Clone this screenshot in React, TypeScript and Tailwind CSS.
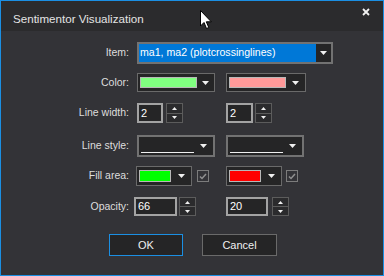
import React from 'react';

const font = { fontFamily: '"Liberation Sans", Arial, sans-serif' };

function Arrow() {
    return (
        <svg width="7" height="4" viewBox="0 0 7 4" className="block">
            <polygon points="0,0 7,0 3.5,4" fill="#f0f0f0" />
        </svg>
    );
}

function SpinButtons({ h }: { h: string }) {
    return (
        <div className={`flex flex-col w-[17px] ${h}`}>
            <div className="flex-1 flex items-center justify-center border border-[#5c5c5c] bg-[#2b2b2d]">
                <svg width="5" height="3" viewBox="0 0 5 3"><polygon points="2.5,0 5,3 0,3" fill="#f0f0f0" /></svg>
            </div>
            <div className="flex-1 flex items-center justify-center border border-t-0 border-[#5c5c5c] bg-[#2b2b2d]">
                <svg width="5" height="3" viewBox="0 0 5 3"><polygon points="0,0 5,0 2.5,3" fill="#f0f0f0" /></svg>
            </div>
        </div>
    );
}

function ColorCombo({ color, w, h, swatchW }: { color: string; w: string; h: string; swatchW: string }) {
    return (
        <div className={`flex items-center ${w} ${h} border border-[#6a6a6a] bg-[#252526] pl-[2px]`}>
            <div className={`${swatchW} h-[calc(100%-6px)] border border-[#b8b8b8]`} style={{ backgroundColor: color }} />
            <div className="flex-1 flex items-center justify-center">
                <Arrow />
            </div>
        </div>
    );
}

function LineCombo() {
    return (
        <div className="flex w-[78px] h-[22px] border-2 border-[#727272] bg-[#252526]">
            <div className="w-[55px] flex items-end pl-[2px] pb-[2px]">
                <div className="w-[53px] h-px bg-[#f0f0f0]" />
            </div>
            <div className="flex-1 flex items-center justify-center">
                <Arrow />
            </div>
        </div>
    );
}

function Check() {
    return (
        <div className="w-[12px] h-[12px] border border-[#7c7c7c] flex items-center justify-center">
            <svg width="8" height="7" viewBox="0 0 8 7">
                <polyline points="1,3.5 3,5.5 7,1" fill="none" stroke="#909090" strokeWidth="1.5" />
            </svg>
        </div>
    );
}

function Label({ children }: { children: React.ReactNode }) {
    return <div className="w-[128px] pr-0 text-right text-[#dedede]">{children}</div>;
}

export default function App() {
    return (
        <div className="relative w-[384px] h-[276px] border border-[#1b8fe3] flex flex-col text-[10.5px] select-none" style={font}>
            <div className="h-[30px] bg-[#2b2b2d] flex items-start pl-[12px] pr-[12px] shrink-0">
                <span className="text-[11.6px] text-[#e4e4e4] pt-[11px] leading-[14px]">Sentimentor Visualization</span>
                <div className="ml-auto pr-[1px] pt-[7px]">
                    <svg width="8" height="8" viewBox="0 0 8 8" className="block">
                        <path d="M1 1 L7 7 M7 1 L1 7" stroke="#f2f2f2" strokeWidth="1.8" />
                    </svg>
                </div>
            </div>

            <div className="flex-1 bg-[#333337] flex flex-col">
                {/* item */}
                <div className="flex items-center h-[22px] mt-[11px]">
                    <Label>Item:</Label>
                    <div className="ml-[8px] flex w-[196px] h-[22px] border-2 border-[#727272] bg-[#252526]">
                        <div className="flex-1 bg-[#0078d7] text-white flex items-center pl-[1px] text-[10.6px]">ma1, ma2 (plotcrossinglines)</div>
                        <div className="w-[15px] flex items-center justify-center">
                            <Arrow />
                        </div>
                    </div>
                </div>

                {/* color */}
                <div className="flex items-center h-[19px] mt-[9px]">
                    <Label>Color:</Label>
                    <div className="ml-[8px] w-[89px]">
                        <ColorCombo color="#80ff80" w="w-[78px]" h="h-[19px]" swatchW="w-[57px]" />
                    </div>
                    <ColorCombo color="#ff9999" w="w-[80px]" h="h-[19px]" swatchW="w-[57px]" />
                </div>

                {/* line width */}
                <div className="flex items-center h-[20px] mt-[11px]">
                    <Label>Line width:</Label>
                    <div className="ml-[8px] w-[89px] flex gap-[3px]">
                        <div className="w-[26px] h-[20px] border-2 border-[#a3a3a3] bg-[#252526] text-white text-[11px] flex items-center pl-[2px]">2</div>
                        <SpinButtons h="h-[20px]" />
                    </div>
                    <div className="flex gap-[2px]">
                        <div className="w-[27px] h-[20px] border-2 border-[#a3a3a3] bg-[#252526] text-white text-[11px] flex items-center pl-[2px]">2</div>
                        <SpinButtons h="h-[20px]" />
                    </div>
                </div>

                {/* line style */}
                <div className="flex items-center h-[22px] mt-[12px]">
                    <Label>Line style:</Label>
                    <div className="ml-[8px] w-[89px]">
                        <LineCombo />
                    </div>
                    <LineCombo />
                </div>

                {/* fill */}
                <div className="flex items-center h-[20px] mt-[9px]">
                    <Label>Fill area:</Label>
                    <div className="ml-[7px] w-[90px] flex items-center gap-[5px]">
                        <ColorCombo color="#00ff00" w="w-[56px]" h="h-[20px]" swatchW="w-[32px]" />
                        <Check />
                    </div>
                    <div className="flex items-center gap-[4px]">
                        <ColorCombo color="#ff0000" w="w-[56px]" h="h-[20px]" swatchW="w-[32px]" />
                        <Check />
                    </div>
                </div>

                {/* opacity */}
                <div className="flex items-center h-[19px] mt-[11px]">
                    <Label>Opacity:</Label>
                    <div className="ml-[5px] w-[92px] flex gap-[2px]">
                        <div className="w-[43px] h-[19px] border-2 border-[#a3a3a3] bg-[#252526] text-white text-[11px] flex items-center pl-[2px]">66</div>
                        <SpinButtons h="h-[19px]" />
                    </div>
                    <div className="flex gap-[4px]">
                        <div className="w-[42px] h-[19px] border-2 border-[#a3a3a3] bg-[#252526] text-white text-[11px] flex items-center pl-[2px]">20</div>
                        <SpinButtons h="h-[19px]" />
                    </div>
                </div>

                {/* buttons */}
                <div className="flex h-[22px] mt-[18px] pl-[108px] gap-[19px]">
                    <button type="button" className="w-[74px] h-[22px] border border-[#1b8fe3] bg-[#252526] text-[#f0f0f0] text-[11px]">OK</button>
                    <button type="button" className="w-[75px] h-[22px] border border-[#6a6a6a] bg-[#252526] text-[#f0f0f0] text-[11px]">Cancel</button>
                </div>
            </div>

            {/* mouse cursor */}
            <svg className="absolute left-[199px] top-[9px]" width="13" height="20" viewBox="0 0 13 20">
                <path d="M0.5 0.5 L0.5 16 L4 12.5 L6.5 18.5 L8.8 17.5 L6.3 11.8 L11.3 11.8 Z" fill="#ffffff" stroke="#000000" strokeWidth="1" />
            </svg>
        </div>
    );
}
